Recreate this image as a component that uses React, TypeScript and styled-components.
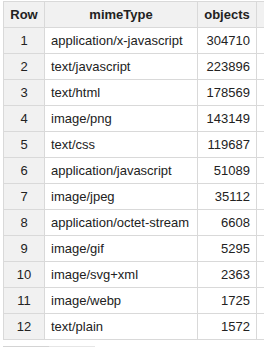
import React from "react";
import styled, { createGlobalStyle } from "styled-components";

const Global = createGlobalStyle`
  html, body { margin: 0; padding: 0; background: #fff; }
  body { font-family: "Liberation Sans", Arial, sans-serif; overflow: hidden; }
`;

const Page = styled.div`
  padding: 1px 0 0 3px;
  width: 261px;
  overflow: hidden;
`;

const Table = styled.table`
  border-collapse: collapse;
  table-layout: fixed;
  width: 294px;
  font-size: 13px;
  color: #222;
`;

const Head = styled.th<{ $align?: string }>`
  height: 25px;
  padding: 0 6px;
  background: #f1f1f1;
  border: 1px solid #d9d9d9;
  font-weight: bold;
  text-align: ${(p) => p.$align || "center"};
  white-space: nowrap;
`;

const Cell = styled.td<{ $align?: string; $shaded?: boolean }>`
  height: 25px;
  padding: 0 6px;
  border: 1px solid #d9d9d9;
  background: ${(p) => (p.$shaded ? "#f1f1f1" : "#fff")};
  text-align: ${(p) => p.$align || "left"};
  white-space: nowrap;
`;

const Scrollbar = styled.div`
  margin-top: 6px;
  width: 92px;
  height: 2px;
  display: flex;
`;

const ScrollPart = styled.div<{ $dark?: boolean }>`
  flex: 1;
  background: ${(p) => (p.$dark ? "#d4d4d4" : "#e6e6e6")};
`;

const rows: [string, number][] = [
  ["application/x-javascript", 304710],
  ["text/javascript", 223896],
  ["text/html", 178569],
  ["image/png", 143149],
  ["text/css", 119687],
  ["application/javascript", 51089],
  ["image/jpeg", 35112],
  ["application/octet-stream", 6608],
  ["image/gif", 5295],
  ["image/svg+xml", 2363],
  ["image/webp", 1725],
  ["text/plain", 1572],
];

export default function App() {
  return (
    <Page>
      <Global />
      <Table>
        <colgroup>
          <col style={{ width: 41 }} />
          <col style={{ width: 153 }} />
          <col style={{ width: 59 }} />
          <col style={{ width: 41 }} />
        </colgroup>
        <thead>
          <tr>
            <Head>Row</Head>
            <Head>mimeType</Head>
            <Head>objects</Head>
            <Head />
          </tr>
        </thead>
        <tbody>
          {rows.map(([mime, n], i) => (
            <tr key={mime}>
              <Cell $align="center" $shaded>
                {i + 1}
              </Cell>
              <Cell>{mime}</Cell>
              <Cell $align="right">{n}</Cell>
              <Cell />
            </tr>
          ))}
        </tbody>
      </Table>
      <Scrollbar>
        <ScrollPart $dark />
        <ScrollPart />
      </Scrollbar>
    </Page>
  );
}
